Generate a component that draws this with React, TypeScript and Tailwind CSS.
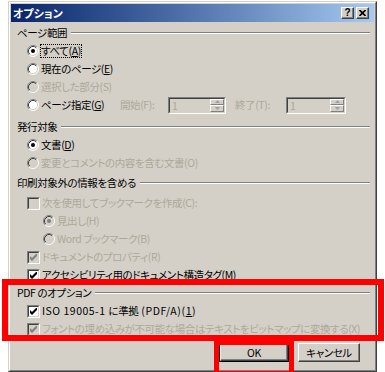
import React from "react";

const DIS = "text-[#aca899]";

function Radio({ checked = false, disabled = false }: { checked?: boolean; disabled?: boolean }) {
  return (
    <svg width="12" height="12" viewBox="0 0 12 12" className="shrink-0">
      <circle cx="6" cy="6" r="5" fill={disabled ? "#d4d0c8" : "#ffffff"} />
      <path d="M2.11 9.89 A5.5 5.5 0 0 1 9.89 2.11" stroke="#808080" fill="none" />
      <path d="M9.89 2.11 A5.5 5.5 0 0 1 2.11 9.89" stroke="#ffffff" fill="none" />
      <path d="M2.82 9.18 A4.5 4.5 0 0 1 9.18 2.82" stroke="#404040" fill="none" />
      <path d="M9.18 2.82 A4.5 4.5 0 0 1 2.82 9.18" stroke="#d4d0c8" fill="none" />
      {checked && <circle cx="6" cy="6" r="2" fill={disabled ? "#808080" : "#000000"} />}
    </svg>
  );
}

function Check({ checked = false, disabled = false }: { checked?: boolean; disabled?: boolean }) {
  return (
    <div className="w-[13px] h-[13px] shrink-0 border border-t-[#808080] border-l-[#808080] border-b-white border-r-white">
      <div
        className={`w-full h-full flex items-center justify-center border border-t-[#404040] border-l-[#404040] border-b-[#d4d0c8] border-r-[#d4d0c8] ${
          disabled ? "bg-[#d4d0c8]" : "bg-white"
        }`}
      >
        {checked && (
          <svg width="7" height="7" viewBox="0 0 7 7">
            <path d="M0 2 L2 4 L7 -1 L7 2 L2 7 L0 5 Z" fill={disabled ? "#808080" : "#000000"} />
          </svg>
        )}
      </div>
    </div>
  );
}

function Header({ children }: { children: React.ReactNode }) {
  return (
    <div className="flex items-center h-[18px] pl-[6px] pr-[4px]">
      <span className="whitespace-nowrap">{children}</span>
      <div className="flex-1 ml-[4px] h-[2px] border-t border-t-[#808080] border-b border-b-white" />
    </div>
  );
}

function SpinBtn({ up }: { up?: boolean }) {
  return (
    <div className="flex-1 flex items-center justify-center border border-t-white border-l-white border-b-[#808080] border-r-[#808080]">
      <svg width="5" height="3" viewBox="0 0 5 3">
        {up ? <path d="M0 3 L2.5 0 L5 3 Z" fill="#a0a0a0" /> : <path d="M0 0 L2.5 3 L5 0 Z" fill="#a0a0a0" />}
      </svg>
    </div>
  );
}

function Spin({ wide }: { wide?: boolean }) {
  return (
    <div
      className={`h-[17px] flex border border-t-[#808080] border-l-[#808080] border-b-white border-r-white ${
        wide ? "w-[60px]" : "w-[58px]"
      }`}
    >
      <div className="flex-1 flex border border-t-[#404040] border-l-[#404040] border-b-[#d4d0c8] border-r-[#d4d0c8] bg-[#d4d0c8]">
        <span className={`pl-[2px] leading-[13px] ${DIS}`}>1</span>
        <div className="ml-auto w-[14px] flex flex-col">
          <SpinBtn up />
          <SpinBtn />
        </div>
      </div>
    </div>
  );
}

export default function App() {
  return (
    <div className="relative w-[385px] h-[372px] bg-white overflow-hidden text-[10.5px] tracking-[-0.4px] leading-[14px] text-black font-['Noto_Sans_CJK_JP',sans-serif] [font-feature-settings:'palt']">
      <div className="ml-[8px] mt-[1px] w-[369px] h-[371px] border border-t-[#d4d0c8] border-l-[#d4d0c8] border-b-[#404040] border-r-[#404040]">
        <div className="w-full h-full flex flex-col p-px bg-[#d4d0c8] border border-t-white border-l-white border-b-[#808080] border-r-[#808080]">
          {/* Title bar */}
          <div className="h-[18px] shrink-0 flex items-center pl-[2px] pr-[5px] bg-linear-to-r from-[#0a246a] to-[#a6caf0]">
            <span className="text-white font-bold text-[11px] tracking-normal">オプション</span>
            <div className="ml-auto flex gap-[2px]">
              <div className="w-[13px] h-[12px] flex items-center justify-center bg-[#d4d0c8] border border-t-white border-l-white border-b-[#404040] border-r-[#404040] shadow-[inset_-1px_-1px_#808080] font-bold text-[10px] leading-none tracking-normal font-['Liberation_Sans',sans-serif]">
                ?
              </div>
              <div className="w-[13px] h-[12px] flex items-center justify-center bg-[#d4d0c8] border border-t-white border-l-white border-b-[#404040] border-r-[#404040] shadow-[inset_-1px_-1px_#808080]">
                <svg width="7" height="6" viewBox="0 0 7 6">
                  <path d="M0.5 0 L6.5 6 M6.5 0 L0.5 6" stroke="#000" strokeWidth="1.6" />
                </svg>
              </div>
            </div>
          </div>

          {/* Content */}
          <div className="flex flex-col pt-[2px]">
            <Header>ページ範囲</Header>
            <div className="flex items-center h-[18px] pl-[16px]">
              <Radio checked />
              <span className="ml-[1px] border border-dotted border-black leading-[12px]">
                すべて(<u>A</u>)
              </span>
            </div>
            <div className="flex items-center h-[18px] pl-[16px]">
              <Radio />
              <span className="ml-[2px]">
                現在のページ(<u>E</u>)
              </span>
            </div>
            <div className="flex items-center h-[18px] pl-[16px]">
              <Radio disabled />
              <span className={`ml-[2px] ${DIS}`}>選択した部分(S)</span>
            </div>
            <div className="flex items-center h-[18px] pl-[16px]">
              <Radio />
              <span className="ml-[2px] w-[79px] whitespace-nowrap">
                ページ指定(<u>G</u>)
              </span>
              <span className={`w-[48px] whitespace-nowrap ${DIS}`}>開始(F):</span>
              <Spin />
              <span className={`ml-[9px] w-[51px] whitespace-nowrap ${DIS}`}>終了(T):</span>
              <Spin wide />
            </div>

            <div className="mt-[4px]">
              <Header>発行対象</Header>
            </div>
            <div className="flex items-center h-[18px] pl-[16px]">
              <Radio checked />
              <span className="ml-[2px]">
                文書(<u>D</u>)
              </span>
            </div>
            <div className="flex items-center h-[18px] pl-[16px]">
              <Radio disabled />
              <span className={`ml-[2px] whitespace-nowrap ${DIS}`}>変更とコメントの内容を含む文書(O)</span>
            </div>

            <div className="mt-[2px]">
              <Header>印刷対象外の情報を含める</Header>
            </div>
            <div className="flex items-center h-[18px] pl-[16px] mt-[2px]">
              <Check disabled />
              <span className={`ml-[2px] whitespace-nowrap ${DIS}`}>次を使用してブックマークを作成(C):</span>
            </div>
            <div className="flex items-center h-[18px] pl-[32px]">
              <Radio checked disabled />
              <span className={`ml-[2px] ${DIS}`}>見出し(H)</span>
            </div>
            <div className="flex items-center h-[18px] pl-[32px]">
              <Radio disabled />
              <span className={`ml-[2px] ${DIS}`}>Word ブックマーク(B)</span>
            </div>
            <div className="flex items-center h-[18px] pl-[16px]">
              <Check checked disabled />
              <span className={`ml-[2px] ${DIS}`}>ドキュメントのプロパティ(R)</span>
            </div>
            <div className="flex items-center h-[18px] pl-[16px]">
              <Check checked />
              <span className="ml-[2px] whitespace-nowrap">
                アクセシビリティ用のドキュメント構造タグ(<u>M</u>)
              </span>
            </div>

            <Header>PDF のオプション</Header>
            <div className="flex items-center h-[18px] pl-[16px]">
              <Check checked />
              <span className="ml-[2px] whitespace-nowrap">
                <span className="tracking-[0.5px]">ISO 19005-1 </span>
                に準拠
                <span className="tracking-[0.6px]">
                  {" "}
                  (PDF/A)(<u>1</u>)
                </span>
              </span>
            </div>
            <div className="flex items-center h-[18px] pl-[16px]">
              <Check checked disabled />
              <span className={`ml-[2px] whitespace-nowrap ${DIS}`}>
                フォントの埋め込みが不可能な場合はテキストをビットマップに変換する(X)
              </span>
            </div>

            <div className="flex justify-end gap-[9px] pr-[14px] mt-[5px]">
              <div className="w-[70px] h-[19px] border border-black">
                <div className="w-full h-full flex items-center justify-center border border-t-white border-l-white border-b-[#404040] border-r-[#404040] shadow-[inset_-1px_-1px_#808080]">
                  OK
                </div>
              </div>
              <div className="w-[62px] h-[19px] flex items-center justify-center border border-t-white border-l-white border-b-[#404040] border-r-[#404040] shadow-[inset_-1px_-1px_#808080]">
                キャンセル
              </div>
            </div>
          </div>
        </div>
      </div>

      {/* red annotation boxes */}
      <div className="absolute left-[2px] top-[279px] w-[382px] h-[62px] border-[6px] border-[#ff0000]" />
      <div className="absolute left-[214px] top-[340px] w-[80px] h-[36px] border-[5px] border-[#ff0000]" />
    </div>
  );
}
